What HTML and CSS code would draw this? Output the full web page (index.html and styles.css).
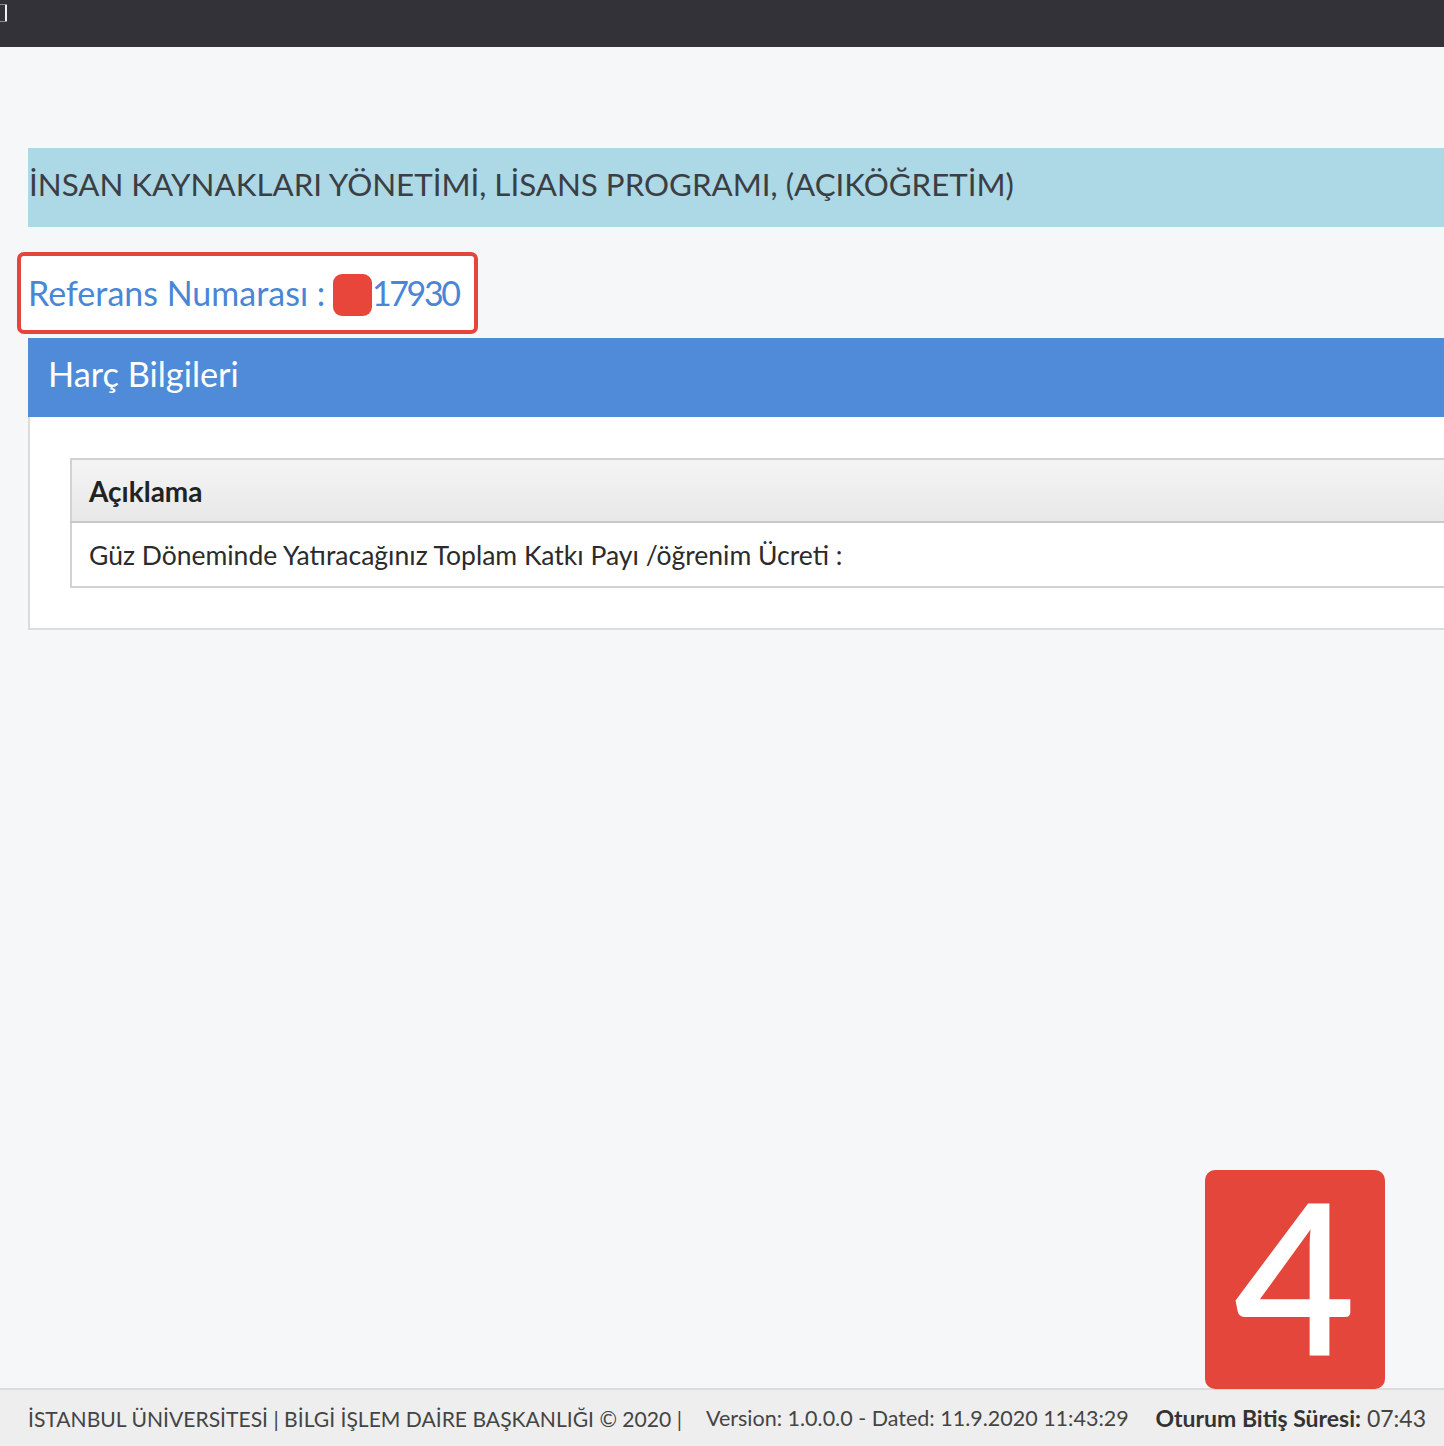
FILE: index.html
```html
<!DOCTYPE html>
<html lang="tr">
<head>
<meta charset="utf-8">
<title>Harç Bilgileri</title>
<link rel="stylesheet" href="styles.css">
</head>
<body>
<div class="topbar"><span class="topbar-mark"></span></div>
<main class="page">
  <div class="program-band">İNSAN KAYNAKLARI YÖNETİMİ, LİSANS PROGRAMI, (AÇIKÖĞRETİM)</div>
  <div class="ref-row">
    <div class="ref-box">Referans Numarası : <span class="redact"></span><span class="ref-num">17930</span></div>
  </div>
  <section class="panel">
    <div class="panel-head">Harç Bilgileri</div>
    <div class="panel-body">
      <table class="fee-table">
        <thead><tr><th>Açıklama</th></tr></thead>
        <tbody><tr><td>Güz Döneminde Yatıracağınız Toplam Katkı Payı /öğrenim Ücreti :</td></tr></tbody>
      </table>
    </div>
  </section>
</main>
<footer class="footer">
  <span class="f-left">İSTANBUL ÜNİVERSİTESİ | BİLGİ İŞLEM DAİRE BAŞKANLIĞI © 2020 |</span>
  <span class="f-mid">Version: 1.0.0.0 - Dated: 11.9.2020 11:43:29</span>
  <span class="f-right"><b>Oturum Bitiş Süresi:</b> 07:43</span>
</footer>
<div class="step-badge">4</div>
</body>
</html>
```
FILE: styles.css
```css
html, body {
  margin: 0;
  padding: 0;
}
body {
  background: #f6f7f8;
  font-family: "Source Sans Pro", Lato, "Open Sans", sans-serif;
  color: #333;
  min-height: 100vh;
  display: flex;
  flex-direction: column;
  overflow: hidden;
  position: relative;
}
.topbar {
  height: 47px;
  background: #333238;
  flex: none;
  position: relative;
}
.topbar-mark {
  position: absolute;
  left: 0;
  top: 4px;
  width: 7px;
  height: 18px;
  border-top: 1px solid #8c8c90;
  border-bottom: 1px solid #8c8c90;
  box-sizing: border-box;
}
.topbar-mark::after {
  content: "";
  position: absolute;
  right: 0;
  top: 0;
  width: 2px;
  height: 16px;
  background: #f0f0f2;
}
.page {
  flex: 1;
  padding: 101px 0 0 28px;
}
.program-band {
  background: #add8e6;
  height: 79px;
  box-sizing: border-box;
  padding: 16px 0 0 1px;
  font-size: 31.3px;
  line-height: 40px;
  color: #3b3f44;
  white-space: nowrap;
  overflow: hidden;
}
.ref-row {
  margin-top: 25px;
}
.ref-box {
  display: inline-block;
  margin-left: -11px;
  border: 4px solid #e2463c;
  border-radius: 7px;
  background: #fff;
  height: 82px;
  box-sizing: border-box;
  padding: 0 15px 0 7px;
  font-size: 34px;
  line-height: 74px;
  color: #4a86d6;
  white-space: nowrap;
}
.ref-num {
  letter-spacing: -2.4px;
}
.redact {
  display: inline-block;
  width: 39px;
  height: 42px;
  border-radius: 9px;
  background: #e8453b;
  vertical-align: middle;
  margin: -4px 0 0 -1px;
}
.panel {
  margin-top: 4px;
}
.panel-head {
  background: #4f8bd9;
  height: 79px;
  box-sizing: border-box;
  padding: 16px 0 0 20px;
  font-size: 34.3px;
  line-height: 40px;
  color: #fff;
}
.panel-body {
  background: #fff;
  border-left: 2px solid #dcdcdc;
  border-bottom: 2px solid #dcdcdc;
  padding: 41px 0 40px 40px;
}
.fee-table {
  width: 100%;
  border-collapse: collapse;
  border: 2px solid #d2d2d2;
  border-right: none;
}
.fee-table th {
  text-align: left;
  font-weight: 700;
  font-size: 28px;
  height: 63px;
  box-sizing: border-box;
  padding: 0 17px;
  background: linear-gradient(#f4f4f4, #e8e8e8);
  border-bottom: 2px solid #c8c8c8;
  color: #222;
}
.fee-table td {
  font-size: 26.5px;
  height: 65px;
  box-sizing: border-box;
  padding: 0 17px;
  color: #2b2b2b;
}
.footer {
  flex: none;
  height: 58px;
  box-sizing: border-box;
  border-top: 2px solid #dcdcdc;
  background: #eeeeee;
  display: flex;
  align-items: center;
  padding: 0 18px 0 28px;
  color: #444;
  white-space: nowrap;
}
.f-left {
  font-size: 21.1px;
}
.f-mid {
  margin-left: 24px;
  font-size: 21.5px;
}
.f-right {
  margin-left: auto;
  font-size: 23px;
}
.f-right b {
  font-weight: 700;
  color: #333;
}
.step-badge {
  position: absolute;
  left: 1205px;
  top: 1170px;
  width: 180px;
  height: 219px;
  border-radius: 10px;
  background: #e4463b;
  color: #fff;
  font-family: Lato, sans-serif;
  font-weight: 600;
  font-size: 210px;
  line-height: 208px;
  text-align: center;
}
```
